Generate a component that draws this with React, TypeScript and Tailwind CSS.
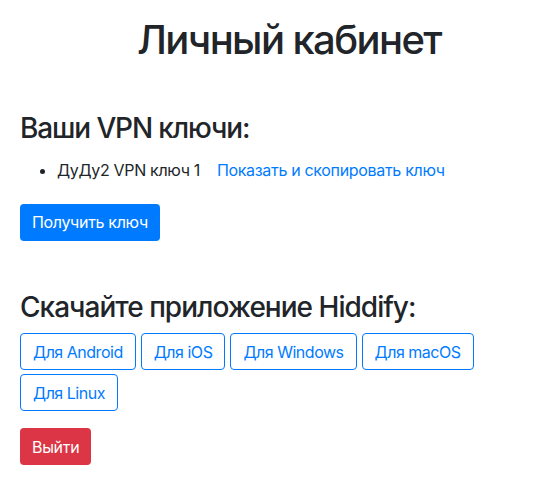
import React from 'react';

const platforms = ['Для Android', 'Для iOS', 'Для Windows', 'Для macOS', 'Для Linux'];

export default function App() {
  return (
    <div className="min-h-screen bg-white px-5 pt-4 text-[#212529] tracking-[-0.02em] font-['Inter','Liberation_Sans',sans-serif]">
      <h1 className="mb-2 pl-[31px] text-center text-[40px] leading-[1.2] font-medium tracking-[-0.04em]">Личный кабинет</h1>

      <section className="mt-12">
        <h3 className="mb-3 text-[28px] leading-[1.2] font-medium tracking-[-0.04em]">Ваши VPN ключи:</h3>
        <ul className="mb-[22px] list-disc pl-[37px] text-base leading-6">
          <li>
            ДуДу2 VPN ключ 1
            <a href="#" className="ml-[17px] text-[#007bff]">Показать и скопировать ключ</a>
          </li>
        </ul>
        <button className="h-[37px] rounded bg-[#007bff] px-3 text-base leading-6 text-white">
          Получить ключ
        </button>
      </section>

      <section className="mt-[50px]">
        <h3 className="mb-[9px] text-[28px] leading-[1.2] font-medium tracking-[-0.035em]">Скачайте приложение Hiddify:</h3>
        <div className="flex flex-wrap gap-x-[5px] gap-y-1">
          {platforms.map((p) => (
            <button
              key={p}
              className="h-[37px] rounded border border-[#007bff] px-3 text-base leading-6 tracking-[-0.03em] text-[#007bff]"
            >
              {p}
            </button>
          ))}
        </div>
        <button className="mt-[17px] h-[37px] rounded bg-[#dc3545] px-3 text-base leading-6 text-white">
          Выйти
        </button>
      </section>
    </div>
  );
}
